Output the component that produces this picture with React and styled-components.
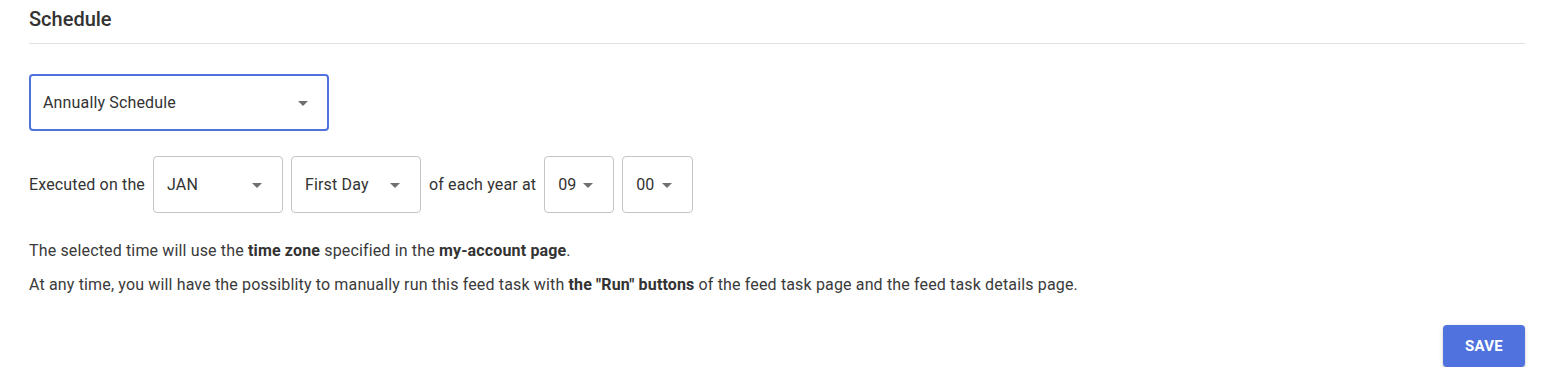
import React from "react";
import styled, { createGlobalStyle } from "styled-components";

const Global = createGlobalStyle`
  html, body { margin: 0; padding: 0; background: #fff; }
  body { font-family: Roboto, "Liberation Sans", sans-serif; color: #3a3a3a; }
`;

const Page = styled.div`
  padding: 0 25px 0 29px;
  width: 1550px;
  box-sizing: border-box;
`;

const Title = styled.h2`
  margin: 0;
  padding: 7px 0 12px;
  font-size: 20px;
  line-height: 24px;
  font-weight: 500;
  color: #333;
  border-bottom: 1px solid #e0e0e0;
`;

const Box = styled.div`
  box-sizing: border-box;
  position: relative;
  display: flex;
  align-items: center;
  width: ${(p) => p.$w}px;
  height: 57px;
  border: ${(p) => (p.$focused ? "2px solid #4f72de" : "1px solid #c4c4c4")};
  padding-left: ${(p) => (p.$focused ? 12 : 13)}px;
  border-radius: 4px;
  font-size: 16px;
  letter-spacing: 0.15px;
  color: #333;
  background: #fff;
  flex-shrink: 0;
`;

const Arrow = styled.span`
  position: absolute;
  right: ${(p) => (p.$focused ? 19 : 20)}px;
  top: 50%;
  margin-top: -2px;
  width: 0;
  height: 0;
  border-left: 5px solid transparent;
  border-right: 5px solid transparent;
  border-top: 5px solid #707070;
`;

const Select = ({ w, focused, children }) => (
  <Box $w={w} $focused={focused}>
    {children}
    <Arrow $focused={focused} />
  </Box>
);

const TypeRow = styled.div`
  margin-top: 30px;
`;

const Row = styled.div`
  margin-top: 25px;
  display: flex;
  align-items: center;
  gap: 8px;
  font-size: 16px;
  letter-spacing: 0.15px;
  color: #333;
`;

const Label = styled.span`
  white-space: nowrap;
`;

const Notes = styled.div`
  margin-top: 28px;
  font-size: 16px;
  letter-spacing: 0.15px;
  line-height: 20px;
  color: #3a3a3a;
  p { margin: 0 0 14px; }
  b { font-weight: 700; color: #333; }
`;

const Actions = styled.div`
  display: flex;
  justify-content: flex-end;
  margin-top: 30px;
`;

const SaveButton = styled.button`
  width: 82px;
  height: 42px;
  border: none;
  border-radius: 4px;
  background: #4f72de;
  color: #fff;
  font-family: Roboto, "Liberation Sans", sans-serif;
  font-size: 15px;
  font-weight: 700;
  letter-spacing: 0.3px;
  text-transform: uppercase;
  box-shadow: 0 3px 1px -2px rgba(0,0,0,0.2), 0 2px 2px 0 rgba(0,0,0,0.14), 0 1px 5px 0 rgba(0,0,0,0.12);
  cursor: pointer;
`;

export default function App() {
  return (
    <Page>
      <Global />
      <Title>Schedule</Title>
      <TypeRow>
        <Select w={300} focused>Annually Schedule</Select>
      </TypeRow>
      <Row>
        <Label>Executed on the</Label>
        <Select w={130}>JAN</Select>
        <Select w={130}>First Day</Select>
        <Label>of each year at</Label>
        <Select w={70}>09</Select>
        <Select w={71}>00</Select>
      </Row>
      <Notes>
        <p>
          The selected time will use the <b>time zone</b> specified in the <b>my-account page</b>.
        </p>
        <p>
          At any time, you will have the possiblity to manually run this feed task with <b>the "Run" buttons</b> of the feed task page and the feed task details page.
        </p>
      </Notes>
      <Actions>
        <SaveButton>Save</SaveButton>
      </Actions>
    </Page>
  );
}
